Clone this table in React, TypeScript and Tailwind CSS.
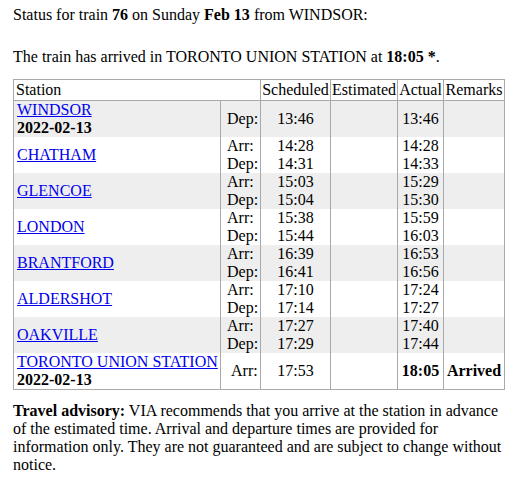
import React from "react";

type Stop = {
    name: string;
    date?: string;
    kinds: string[];
    scheduled: string[];
    actual: string[];
    remarks?: string;
    last?: boolean;
};

const stops: Stop[] = [
    { name: "WINDSOR", date: "2022-02-13", kinds: ["Dep:"], scheduled: ["13:46"], actual: ["13:46"] },
    { name: "CHATHAM", kinds: ["Arr:", "Dep:"], scheduled: ["14:28", "14:31"], actual: ["14:28", "14:33"] },
    { name: "GLENCOE", kinds: ["Arr:", "Dep:"], scheduled: ["15:03", "15:04"], actual: ["15:29", "15:30"] },
    { name: "LONDON", kinds: ["Arr:", "Dep:"], scheduled: ["15:38", "15:44"], actual: ["15:59", "16:03"] },
    { name: "BRANTFORD", kinds: ["Arr:", "Dep:"], scheduled: ["16:39", "16:41"], actual: ["16:53", "16:56"] },
    { name: "ALDERSHOT", kinds: ["Arr:", "Dep:"], scheduled: ["17:10", "17:14"], actual: ["17:24", "17:27"] },
    { name: "OAKVILLE", kinds: ["Arr:", "Dep:"], scheduled: ["17:27", "17:29"], actual: ["17:40", "17:44"] },
    {
        name: "TORONTO UNION STATION",
        date: "2022-02-13",
        kinds: ["Arr:"],
        scheduled: ["17:53"],
        actual: ["18:05"],
        remarks: "Arrived",
        last: true,
    },
];

const Lines = ({ items }: { items: string[] }) => (
    <>
        {items.map((t, i) => (
            <div key={i}>{t}</div>
        ))}
    </>
);

const cell = "border-x border-[#a9a9a9] p-0 align-middle";

export default function App() {
    return (
        <div className="bg-white text-black font-['Liberation_Serif',serif] text-[16px] leading-[18px] pl-[13px] pt-[6px] w-[505px]">
            <p>
                Status for train <b>76</b> on Sunday <b>Feb 13</b> from WINDSOR:
            </p>
            <p className="mt-[24px]">
                The train has arrived in TORONTO UNION STATION at <b>18:05 *</b>.
            </p>

            <table className="mt-[13px] w-[492px] table-fixed border-collapse border border-[#a9a9a9]">
                <colgroup>
                    <col className="w-[207px]" />
                    <col className="w-[40px]" />
                    <col className="w-[70px]" />
                    <col className="w-[67px]" />
                    <col className="w-[46px]" />
                    <col className="w-[61px]" />
                </colgroup>
                <thead>
                    <tr className="border-b border-[#a9a9a9]">
                        <th colSpan={2} className="border-x border-[#a9a9a9] px-[2px] py-[1px] text-left font-normal">
                            Station
                        </th>
                        <th className="border-x border-[#a9a9a9] px-0 py-[1px] font-normal">Scheduled</th>
                        <th className="border-x border-[#a9a9a9] px-0 py-[1px] font-normal">Estimated</th>
                        <th className="border-x border-[#a9a9a9] px-0 py-[1px] font-normal">Actual</th>
                        <th className="border-x border-[#a9a9a9] px-0 py-[1px] font-normal">Remarks</th>
                    </tr>
                </thead>
                <tbody>
                    {stops.map((s, i) => (
                        <tr key={s.name} className={i % 2 === 0 ? "bg-[#eeeeee]" : "bg-white"}>
                            <td className={`${cell} pl-[3px] h-[36px] whitespace-nowrap`}>
                                <a href="#" className="text-[#0000ee] underline">
                                    {s.name}
                                </a>
                                {s.date && <div className="font-bold">{s.date}</div>}
                            </td>
                            <td className={`${cell} ${s.last ? "pl-[10px]" : "pl-[6px]"}`}>
                                <Lines items={s.kinds} />
                            </td>
                            <td className={`${cell} text-center`}>
                                <Lines items={s.scheduled} />
                            </td>
                            <td className={cell}></td>
                            <td className={`${cell} text-center ${s.last ? "font-bold" : ""}`}>
                                <Lines items={s.actual} />
                            </td>
                            <td className={`${cell} text-center font-bold`}>{s.remarks}</td>
                        </tr>
                    ))}
                </tbody>
            </table>

            <p className="mt-[12px] w-[492px]">
                <b>Travel advisory:</b> VIA recommends that you arrive at the station in advance of the estimated
                time. Arrival and departure times are provided for information only. They are not guaranteed and
                are subject to change without notice.
            </p>
        </div>
    );
}
